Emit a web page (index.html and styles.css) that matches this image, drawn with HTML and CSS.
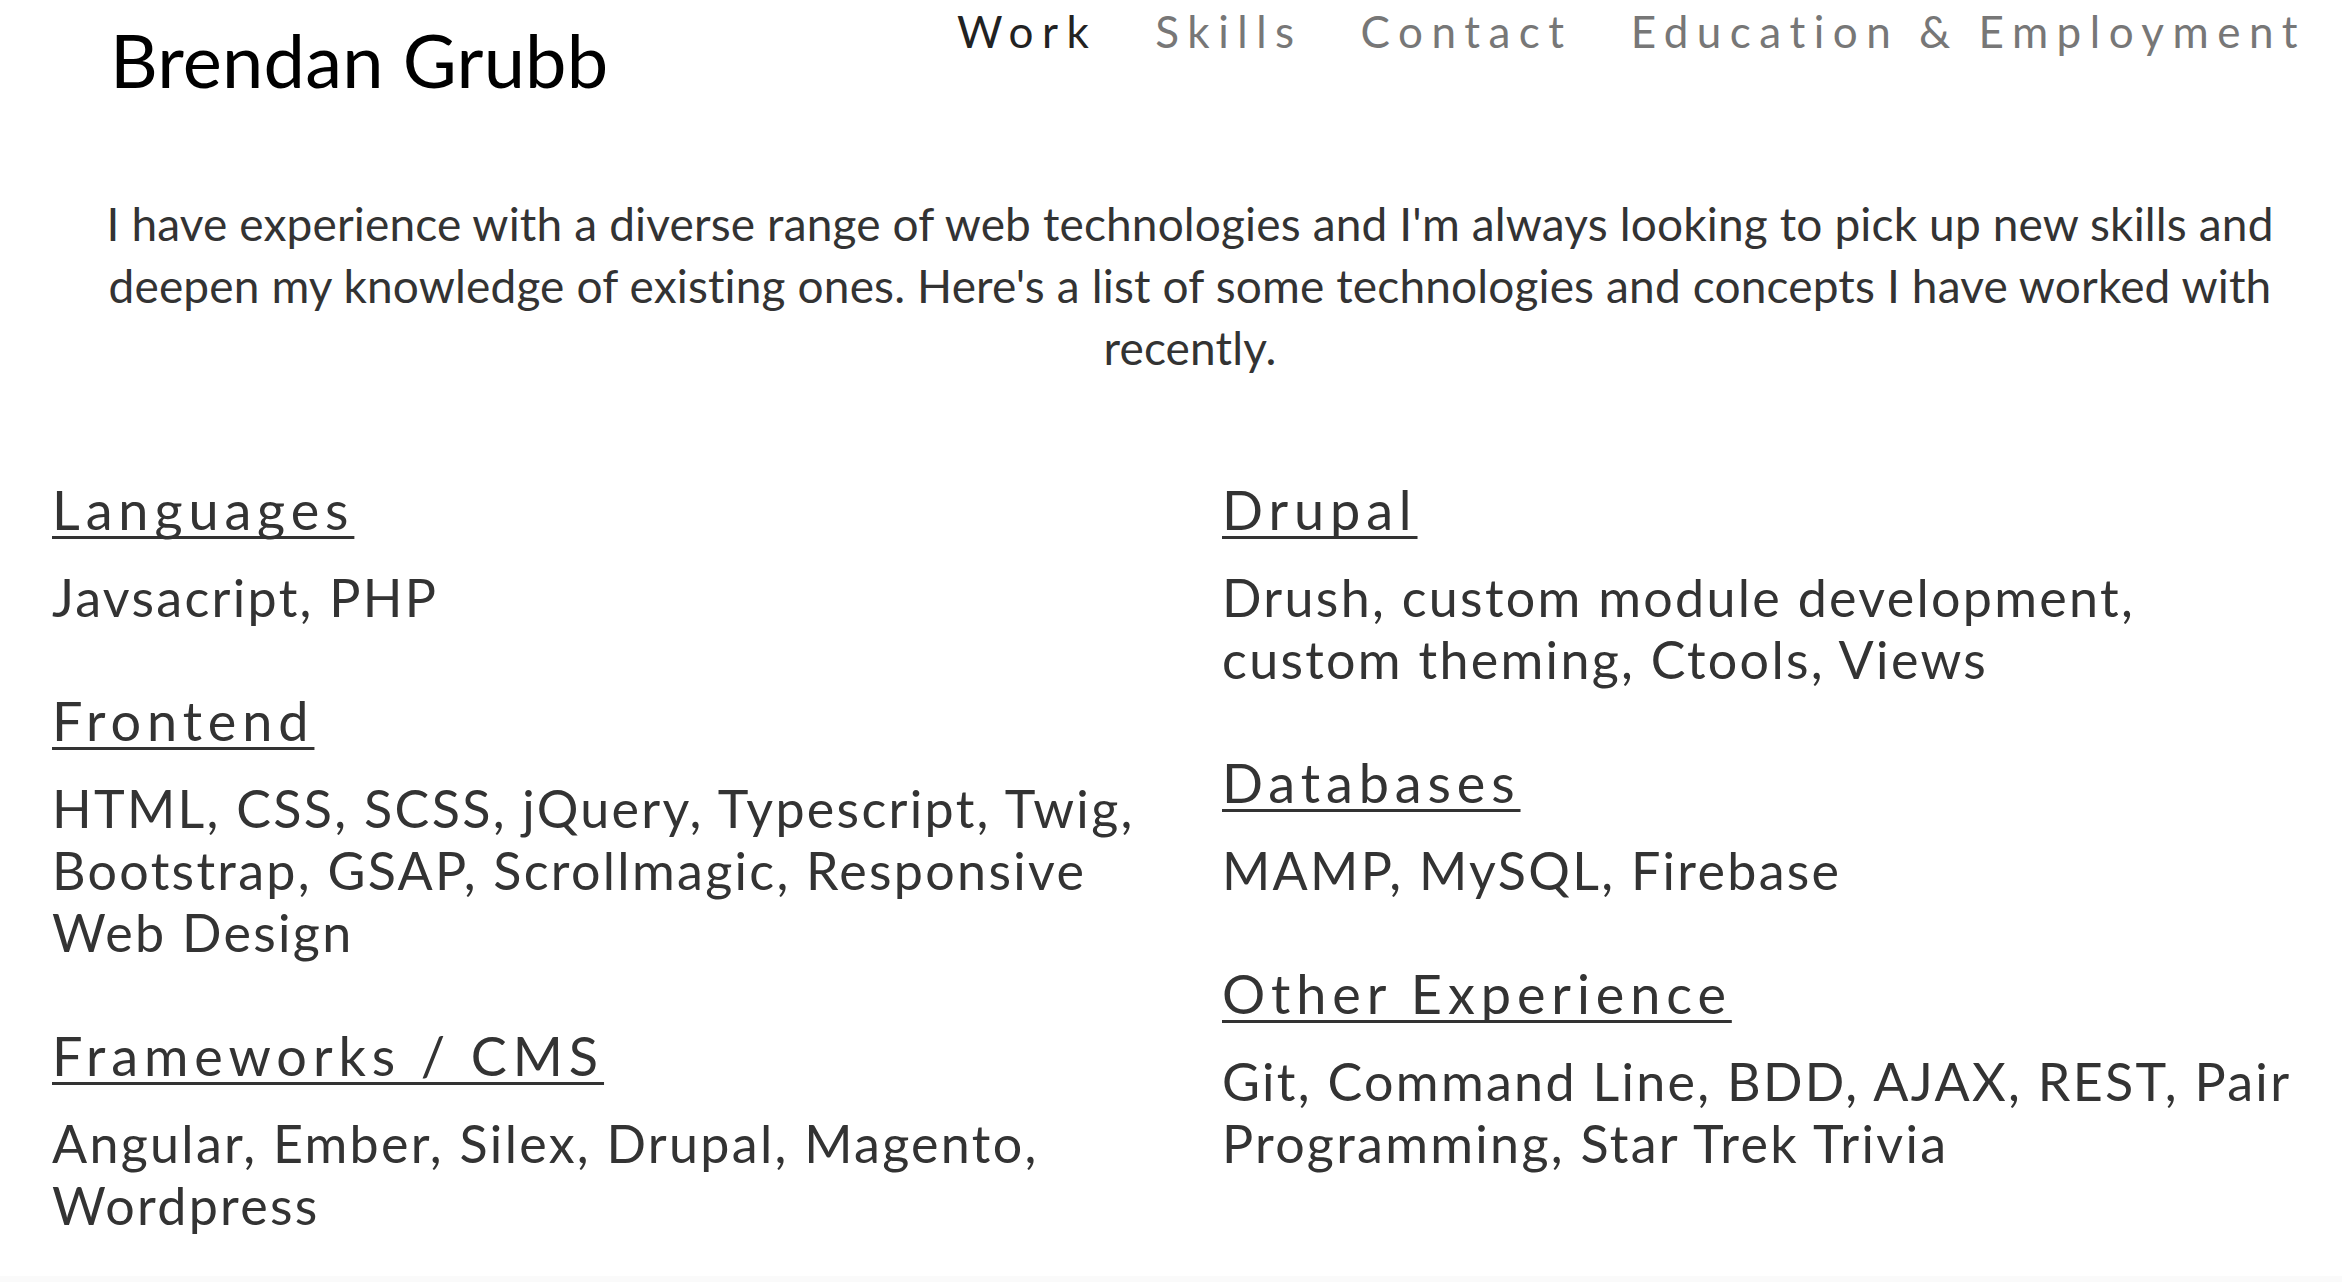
FILE: index.html
```html
<!DOCTYPE html>
<html lang="en">
<head>
<meta charset="utf-8">
<title>Brendan Grubb - Skills</title>
<link rel="stylesheet" href="styles.css">
</head>
<body>
<header class="site-header">
  <h1 class="site-title">Brendan Grubb</h1>
  <nav class="site-nav">
    <a class="nav-link nav-link--active" href="#work">Work</a>
    <a class="nav-link" href="#skills">Skills</a>
    <a class="nav-link" href="#contact">Contact</a>
    <a class="nav-link" href="#education">Education &amp; Employment</a>
  </nav>
</header>
<main class="skills">
  <p class="intro">I have experience with a diverse range of web technologies and I'm always looking to pick up new skills and deepen my knowledge of existing ones. Here's a list of some technologies and concepts I have worked with recently.</p>
  <div class="skill-grid">
    <div class="skill-col">
      <section class="skill">
        <h3 class="skill-title">Languages</h3>
        <p class="skill-list">Javsacript, PHP</p>
      </section>
      <section class="skill">
        <h3 class="skill-title">Frontend</h3>
        <p class="skill-list">HTML, CSS, SCSS, jQuery, Typescript, Twig, Bootstrap, GSAP, Scrollmagic, Responsive Web Design</p>
      </section>
      <section class="skill">
        <h3 class="skill-title">Frameworks / CMS</h3>
        <p class="skill-list">Angular, Ember, Silex, Drupal, Magento, Wordpress</p>
      </section>
    </div>
    <div class="skill-col">
      <section class="skill">
        <h3 class="skill-title">Drupal</h3>
        <p class="skill-list">Drush, custom module development, custom theming, Ctools, Views</p>
      </section>
      <section class="skill">
        <h3 class="skill-title">Databases</h3>
        <p class="skill-list">MAMP, MySQL, Firebase</p>
      </section>
      <section class="skill">
        <h3 class="skill-title">Other Experience</h3>
        <p class="skill-list">Git, Command Line, BDD, AJAX, REST, Pair Programming, Star Trek Trivia</p>
      </section>
    </div>
  </div>
</main>
<div class="next-section"></div>
</body>
</html>
```

FILE: styles.css
```css
html, body {
  margin: 0;
  padding: 0;
  background: #ffffff;
}

body {
  font-family: Lato, "Noto Sans", sans-serif;
  color: #333333;
}

.site-header {
  display: flex;
  justify-content: space-between;
  align-items: flex-start;
  padding: 0 36px 0 110px;
}

.site-title {
  margin: 23px 0 0 0;
  font-size: 74px;
  line-height: 1;
  font-weight: 400;
  color: #000000;
  letter-spacing: 0.2px;
}

.site-nav {
  display: flex;
  gap: 58px;
  padding-top: 9px;
}

.nav-link {
  font-size: 44px;
  line-height: 1;
  letter-spacing: 8.5px;
  color: #777777;
  text-decoration: none;
}

.nav-link--active {
  color: #222222;
}

.skills {
  padding-bottom: 40px;
}

.intro {
  margin: 96px 0 0 0;
  padding: 0 50px 0 88px;
  font-size: 46px;
  line-height: 62px;
  letter-spacing: 0.15px;
  text-align: center;
  color: #333333;
}

.skill-grid {
  display: grid;
  grid-template-columns: 1120px 1075px;
  column-gap: 50px;
  padding-left: 52px;
  margin-top: 100px;
}

.skill {
  margin-bottom: 62px;
}

.skill:last-child {
  margin-bottom: 0;
}

.skill-title {
  margin: 0 0 25px 0;
  font-size: 54px;
  line-height: 62px;
  font-weight: 400;
  letter-spacing: 5.9px;
  color: #333333;
  text-decoration: underline;
  text-decoration-thickness: 3px;
  text-underline-offset: 6px;
  text-decoration-skip-ink: none;
}

.skill-list {
  margin: 0;
  font-size: 52px;
  line-height: 62px;
  letter-spacing: 2.3px;
  color: #333333;
}

.next-section {
  height: 40px;
  background: #fafafa;
}
```
